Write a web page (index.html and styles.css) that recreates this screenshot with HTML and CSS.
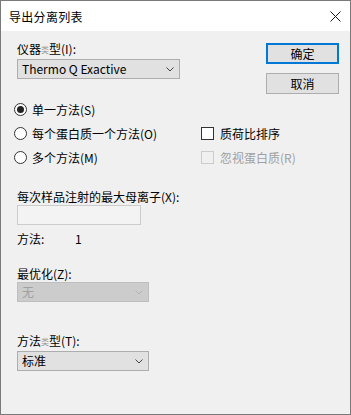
FILE: index.html
```html
<!DOCTYPE html>
<html lang="zh">
<head>
  <meta charset="UTF-8">
  <title>导出分离列表</title>
  <link rel="stylesheet" href="styles.css">
</head>
<body>

  <div class="window">
    <!-- Title bar -->
    <div class="titlebar">
      <span class="title">导出分离列表</span>
      <svg class="close" width="11" height="11" viewBox="0 0 11 11">
        <path d="M0.5 0.5 L10.5 10.5 M10.5 0.5 L0.5 10.5" stroke="#1a1a1a" stroke-width="1" fill="none"/>
      </svg>
    </div>

    <div class="content">
      <div class="top">
        <div class="field">
          <div class="label">仪器<span class="tiny">类</span>型(I):</div>
          <div class="combo wide">
            <span>Thermo Q Exactive</span>
            <svg width="8" height="5" viewBox="0 0 8 5"><polyline points="0.5,0.5 4,4 7.5,0.5" fill="none" stroke="#444" stroke-width="1"/></svg>
          </div>
        </div>
        <div class="buttons">
          <div class="btn default">确定</div>
          <div class="btn">取消</div>
        </div>
      </div>

      <div class="options">
        <label class="opt"><span class="radio checked"></span>单一方法(S)</label>
        <span></span>
        <label class="opt"><span class="radio"></span>每个蛋白质一个方法(O)</label>
        <label class="opt"><span class="check"></span>质荷比排序</label>
        <label class="opt"><span class="radio"></span>多个方法(M)</label>
        <label class="opt disabled"><span class="check"></span>忽视蛋白质(R)</label>
      </div>

      <div class="label gap-x">每次样品注射的最大母离子(X):</div>
      <div class="edit"></div>

      <div class="info">
        <span class="info-key">方法:</span>
        <span>1</span>
      </div>

      <div class="label gap-z">最优化(Z):</div>
      <div class="combo narrow disabled">
        <span>无</span>
        <svg width="8" height="5" viewBox="0 0 8 5"><polyline points="0.5,0.5 4,4 7.5,0.5" fill="none" stroke="#b4b4b4" stroke-width="1"/></svg>
      </div>

      <div class="label gap-t">方法<span class="tiny">类</span>型(T):</div>
      <div class="combo narrow">
        <span>标准</span>
        <svg width="8" height="5" viewBox="0 0 8 5"><polyline points="0.5,0.5 4,4 7.5,0.5" fill="none" stroke="#444" stroke-width="1"/></svg>
      </div>
    </div>
  </div>

</body>
</html>
```

FILE: styles.css
```css
body {
  margin: 0;
  font-family: "Noto Sans CJK SC", "Noto Sans", sans-serif;
  font-size: 12px;
  color: #000;
}

.window {
  width: 351px;
  height: 415px;
  box-sizing: border-box;
  border: 1px solid #7a7a7a;
  display: flex;
  flex-direction: column;
  background: #f0f0f0;
}

.titlebar {
  height: 30px;
  background: #fff;
  display: flex;
  align-items: center;
  justify-content: space-between;
  padding: 0 9px 0 8px;
}

.title {
  font-size: 12px;
  letter-spacing: 0.3px;
}

.content {
  flex: 1;
  padding: 10px 11px 0 16px;
}

.top {
  display: flex;
  justify-content: space-between;
}

.label {
  line-height: 16px;
  height: 16px;
  white-space: nowrap;
}

.tiny {
  font-size: 8px;
  color: #9a9a9a;
  vertical-align: 1px;
}

.combo {
  height: 20px;
  box-sizing: border-box;
  border: 1px solid #adadad;
  background: #e1e1e1;
  display: flex;
  align-items: center;
  justify-content: space-between;
  padding: 0 5px 0 4px;
  line-height: 18px;
}

.combo.wide {
  width: 163px;
  margin-top: 2px;
}

.combo.narrow {
  width: 132px;
}

.combo.disabled {
  background: #cccccc;
  border-color: #bfbfbf;
  color: #a0a0a0;
}

.buttons {
  padding-top: 2px;
  display: flex;
  flex-direction: column;
  gap: 9px;
}

.btn {
  width: 73px;
  height: 21px;
  box-sizing: border-box;
  border: 1px solid #adadad;
  background: #e1e1e1;
  display: flex;
  align-items: center;
  justify-content: center;
}

.btn.default {
  border: 2px solid #0078d7;
}

.options {
  display: grid;
  grid-template-columns: 187px auto;
  grid-auto-rows: 24px;
  margin: 3px 0 0 -3px;
}

.opt {
  display: flex;
  align-items: center;
  white-space: nowrap;
}

.radio {
  width: 13px;
  height: 13px;
  box-sizing: border-box;
  border: 1px solid #333;
  border-radius: 50%;
  background: #fff;
  margin-right: 5px;
  display: flex;
  align-items: center;
  justify-content: center;
}

.radio.checked::after {
  content: "";
  width: 7px;
  height: 7px;
  border-radius: 50%;
  background: #222;
}

.check {
  width: 13px;
  height: 13px;
  box-sizing: border-box;
  border: 1px solid #333;
  background: #fff;
  margin-right: 6px;
}

.opt.disabled {
  color: #a0a0a0;
}

.opt.disabled .check {
  border-color: #cccccc;
  background: #f0f0f0;
}

.gap-x {
  margin-top: 20px;
}

.edit {
  width: 124px;
  height: 20px;
  box-sizing: border-box;
  border: 1px solid #cccccc;
  background: #f3f3f3;
}

.info {
  display: flex;
  line-height: 16px;
  margin-top: 6px;
}

.info-key {
  width: 58px;
}

.gap-z {
  margin-top: 19px;
}

.gap-t {
  margin-top: 31px;
  margin-bottom: 2px;
}
```
